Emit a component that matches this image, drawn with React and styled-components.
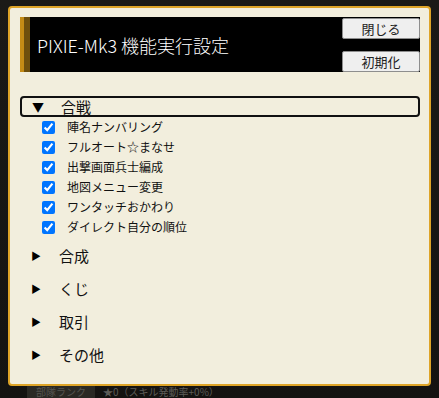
import React from 'react';
import styled, { createGlobalStyle } from 'styled-components';

const GlobalStyle = createGlobalStyle`
  html, body {
    margin: 0;
    padding: 0;
    background: #161513;
    width: 439px;
    height: 398px;
    overflow: hidden;
  }
  body {
    font-family: "Noto Sans CJK JP", "Noto Sans", sans-serif;
  }
`;

const checks = [
  '陣名ナンバリング',
  'フルオート☆まなせ',
  '出撃画面兵士編成',
  '地図メニュー変更',
  'ワンタッチおかわり',
  'ダイレクト自分の順位',
];

const closed = ['合成', 'くじ', '取引', 'その他'];

export default function App() {
  return (
    <Page>
      <GlobalStyle />
      <Panel>
        <Header>
          <Stripe />
          <Title>PIXIE-Mk3 機能実行設定</Title>
          <Buttons>
            <Button>閉じる</Button>
            <Button>初期化</Button>
          </Buttons>
        </Header>

        <SectionHead>
          <Arrow>▼</Arrow>
          <SectionName>合戦</SectionName>
        </SectionHead>
        <CheckList>
          {checks.map((label) => (
            <CheckRow key={label}>
              <Box type="checkbox" checked readOnly />
              <CheckLabel>{label}</CheckLabel>
            </CheckRow>
          ))}
        </CheckList>

        <ClosedList>
          {closed.map((name) => (
            <Collapsed key={name}>
              <Arrow $small>▶</Arrow>
              <SectionName>{name}</SectionName>
            </Collapsed>
          ))}
        </ClosedList>
      </Panel>
      <Strip>
        <Rank>部隊ランク</Rank>
        <RankText>★0（スキル発動率+0%）</RankText>
      </Strip>
    </Page>
  );
}

const Page = styled.div`
  width: 439px;
  height: 398px;
  padding: 6px 0 0 8px;
  box-sizing: border-box;
  background: linear-gradient(180deg, #1b1a17 0%, #141311 100%);
`;

const Panel = styled.div`
  width: 423px;
  height: 380px;
  box-sizing: border-box;
  padding: 9px 9px 0 10px;
  background: #f2eedd;
  border: 2px solid #dea427;
  border-radius: 4px;
`;

const Header = styled.div`
  display: flex;
  align-items: center;
  height: 55px;
  background: #000;
`;

const Stripe = styled.div`
  align-self: stretch;
  width: 4px;
  background: #c48b16;
  border-right: 6px solid #6e4f0d;
`;

const Title = styled.div`
  flex: 1;
  padding-left: 7px;
  color: #fff;
  font-size: 18px;
  font-weight: 300;
  line-height: 1;
`;

const Buttons = styled.div`
  display: flex;
  flex-direction: column;
  justify-content: space-between;
  align-self: stretch;
  padding-top: 1px;
`;

const Button = styled.div`
  width: 78px;
  height: 21px;
  box-sizing: border-box;
  background: #efefef;
  border: 1px solid #8e8e8e;
  border-radius: 2px;
  color: #222;
  font-size: 13px;
  line-height: 19px;
  text-align: center;
`;

const SectionHead = styled.div`
  display: flex;
  align-items: center;
  margin-top: 24px;
  height: 21px;
  box-sizing: border-box;
  border: 2px solid #111;
  border-radius: 4px;
`;

const Arrow = styled.span`
  width: 39px;
  padding-left: ${(p) => (p.$small ? '11px' : '10px')};
  box-sizing: border-box;
  font-size: ${(p) => (p.$small ? '10px' : '12px')};
  color: #000;
  line-height: 1;
`;

const SectionName = styled.span`
  font-size: 15px;
  color: #111;
  line-height: 1;
`;

const CheckList = styled.div`
  display: flex;
  flex-direction: column;
  padding: 0 0 0 22px;
`;

const CheckRow = styled.label`
  display: flex;
  align-items: center;
  height: 20px;
`;

const Box = styled.input`
  width: 13px;
  height: 13px;
  margin: 0 12px 0 0;
  accent-color: #0075ff;
`;

const CheckLabel = styled.span`
  font-size: 12px;
  color: #111;
  line-height: 1;
`;

const ClosedList = styled.div`
  display: flex;
  flex-direction: column;
  padding-top: 2px;
`;

const Collapsed = styled.div`
  display: flex;
  align-items: center;
  height: 33px;
`;

const Strip = styled.div`
  display: flex;
  align-items: center;
  gap: 8px;
  height: 12px;
  margin-left: 19px;
`;

const Rank = styled.div`
  width: 68px;
  height: 12px;
  background: #2a2924;
  color: #55544f;
  font-size: 10px;
  line-height: 12px;
  text-align: center;
`;

const RankText = styled.div`
  color: #5c5b57;
  font-size: 10px;
  line-height: 12px;
`;
